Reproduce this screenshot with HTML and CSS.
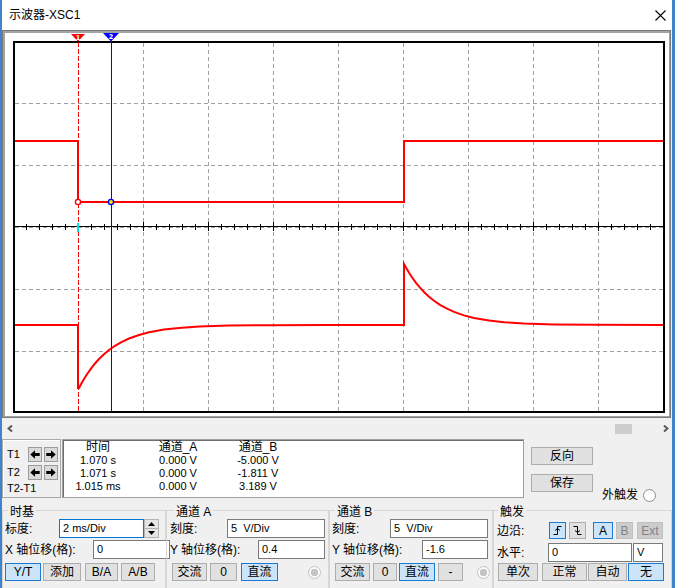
FILE: index.html
```html
<!DOCTYPE html>
<html>
<head>
<meta charset="utf-8">
<title>示波器-XSC1</title>
<link rel="stylesheet" href="styles.css">
</head>
<body>
<div class="window">
  <div class="titlebar">
    <span class="title">示波器-XSC1</span>
    <svg class="close" width="11" height="11" viewBox="0 0 11 11"><path d="M0.5 0.5L10.5 10.5M10.5 0.5L0.5 10.5" stroke="#000" stroke-width="1.1" fill="none"/></svg>
  </div>

  <div class="scope">
    <svg class="plot" width="664" height="383" viewBox="5 33 664 383">
      <g stroke="#a0a0a0" stroke-width="1" stroke-dasharray="4 3" fill="none">
        <path d="M78.5 43V411M143.5 43V411M208.5 43V411M273.5 43V411M338.5 43V411M403.5 43V411M468.5 43V411M533.5 43V411M598.5 43V411"/>
        <path d="M15 103.5H663M15 165.5H663M15 227.5H663M15 289.5H663M15 351.5H663"/>
      </g>
      <path d="M14 226.5H663" stroke="#000" stroke-width="1"/>
      <path stroke="#000" stroke-width="1" fill="none" d="M26.5 224V230M39.5 224V230M52.5 224V230M65.5 224V230M91.5 224V230M104.5 224V230M117.5 224V230M130.5 224V230M156.5 224V230M169.5 224V230M182.5 224V230M195.5 224V230M221.5 224V230M234.5 224V230M247.5 224V230M260.5 224V230M286.5 224V230M299.5 224V230M312.5 224V230M325.5 224V230M351.5 224V230M364.5 224V230M377.5 224V230M390.5 224V230M416.5 224V230M429.5 224V230M442.5 224V230M455.5 224V230M481.5 224V230M494.5 224V230M507.5 224V230M520.5 224V230M546.5 224V230M559.5 224V230M572.5 224V230M585.5 224V230M611.5 224V230M624.5 224V230M637.5 224V230M650.5 224V230"/>
      <path stroke="#000" stroke-width="1" fill="none" d="M143.5 222V231M208.5 222V231M273.5 222V231M338.5 222V231M403.5 222V231M468.5 222V231M533.5 222V231M598.5 222V231"/>
      <rect x="14" y="42" width="650" height="370" fill="none" stroke="#000" stroke-width="2"/>

      <g fill="none" stroke="#ff0000" stroke-width="2" stroke-linejoin="miter">
        <path d="M15 141H78V202H404V141H663"/>
        <path d="M15 325H78V388L79 388L81 384.2L84 379L87 374.3L91 368.6L95 363.5L99 359L104 354.2L109 350L115 345.8L121 342.3L129 338.5L139 335L149 332.3L164 329.6L179 327.9L199 326.6L229 325.6L269 325.2L329 325H404V264L406 267.6L409 272.7L412 277.3L416 282.8L420 287.7L424 292L429 296.7L434 300.8L440 304.9L446 308.2L454 311.9L464 315.4L474 317.9L489 320.5L504 322.2L524 323.5L554 324.4L594 324.8L663 325"/>
      </g>

      <path d="M78.5 42V411" stroke="#ff0000" stroke-width="1" stroke-dasharray="5 2"/>
      <path d="M111.5 41V411" stroke="#0000ff" stroke-width="1"/>
      <path d="M78 223V232" stroke="#00e0e0" stroke-width="2"/>

      <circle cx="78" cy="202" r="2.6" fill="#fff" stroke="#ff0000" stroke-width="1.4"/>
      <circle cx="111" cy="202" r="2.6" fill="#e8e800" stroke="#0000ff" stroke-width="1.4"/>

      <polygon points="71,34 85,34 78,41.5" fill="#ff0000"/>
      <text x="78" y="39.6" class="cur-num">1</text>
      <polygon points="103,33 119,33 111,41.5" fill="#0000ff"/>
      <text x="111" y="39.2" class="cur-num">2</text>
    </svg>
  </div>

  <div class="hscroll">
    <svg class="chev" width="6" height="7" viewBox="0 0 6 7"><path d="M5 0.5L1.6 3.5L5 6.5" stroke="#5a5a5a" stroke-width="2" fill="none"/></svg>
    <div class="spacer"></div>
    <div class="thumb"></div>
    <svg class="chev chev-r" width="6" height="7" viewBox="0 0 6 7"><path d="M1 0.5L4.4 3.5L1 6.5" stroke="#5a5a5a" stroke-width="2" fill="none"/></svg>
  </div>

  <div class="readout">
    <div class="tpanel">
      <div class="trow t1">
        <span class="tlabel">T1</span>
        <span class="abtn"><svg width="10" height="9" viewBox="0 0 10 9"><path d="M0.3 4.5L5 0.3V3H9.7V6H5V8.7Z" fill="#000"/></svg></span>
        <span class="abtn abtn2"><svg width="10" height="9" viewBox="0 0 10 9"><path d="M9.7 4.5L5 0.3V3H0.3V6H5V8.7Z" fill="#000"/></svg></span>
      </div>
      <div class="trow t2">
        <span class="tlabel">T2</span>
        <span class="abtn"><svg width="10" height="9" viewBox="0 0 10 9"><path d="M0.3 4.5L5 0.3V3H9.7V6H5V8.7Z" fill="#000"/></svg></span>
        <span class="abtn abtn2"><svg width="10" height="9" viewBox="0 0 10 9"><path d="M9.7 4.5L5 0.3V3H0.3V6H5V8.7Z" fill="#000"/></svg></span>
      </div>
      <div class="trow t3"><span class="tlabel tlabel-wide">T2-T1</span></div>
    </div>

    <div class="display">
      <div class="dgrid">
        <span class="dh">时间</span><span class="dh">通道_A</span><span class="dh">通道_B</span>
        <span>1.070 s</span><span>0.000 V</span><span>-5.000 V</span>
        <span>1.071 s</span><span>0.000 V</span><span>-1.811 V</span>
        <span>1.015 ms</span><span>0.000 V</span><span>3.189 V</span>
      </div>
    </div>

    <div class="side">
      <span class="btn sbtn">反向</span>
      <span class="btn sbtn sbtn2">保存</span>
      <span class="ext">外触发<span class="radio"></span></span>
    </div>
  </div>

  <div class="controls">
    <fieldset class="group g1">
      <legend>时基</legend>
      <div class="row r1">
        <span class="lbl l-scale">标度:</span>
        <span class="field focus f-scale">2 ms/Div</span>
        <span class="spin">
          <span class="spin-up"><svg width="7" height="4" viewBox="0 0 7 4"><path d="M0 4L3.5 0L7 4Z" fill="#000"/></svg></span>
          <span class="spin-dn"><svg width="7" height="4" viewBox="0 0 7 4"><path d="M0 0L3.5 4L7 0Z" fill="#000"/></svg></span>
        </span>
      </div>
      <div class="row r2">
        <span class="lbl l-xpos">X 轴位移(格):</span>
        <span class="field f-xpos">0</span>
      </div>
      <div class="row r3">
        <span class="btn on b-yt">Y/T</span>
        <span class="btn b-add">添加</span>
        <span class="btn b-ba">B/A</span>
        <span class="btn b-ab">A/B</span>
      </div>
    </fieldset>

    <fieldset class="group g2">
      <legend>通道 A</legend>
      <div class="row r1">
        <span class="lbl l-a-scale">刻度:</span>
        <span class="field f-a-scale">5  V/Div</span>
      </div>
      <div class="row r2">
        <span class="lbl l-a-pos">Y 轴位移(格):</span>
        <span class="field f-a-pos">0.4</span>
      </div>
      <div class="row r3">
        <span class="btn a-ac">交流</span>
        <span class="btn a-0">0</span>
        <span class="btn on a-dc">直流</span>
        <span class="radio dis a-radio"></span>
      </div>
    </fieldset>

    <fieldset class="group g3">
      <legend>通道 B</legend>
      <div class="row r1">
        <span class="lbl l-b-scale">刻度:</span>
        <span class="field f-b-scale">5  V/Div</span>
      </div>
      <div class="row r2">
        <span class="lbl l-b-pos">Y 轴位移(格):</span>
        <span class="field f-b-pos">-1.6</span>
      </div>
      <div class="row r3">
        <span class="btn b-ac">交流</span>
        <span class="btn b-0">0</span>
        <span class="btn on b-dc">直流</span>
        <span class="btn b-minus">-</span>
        <span class="radio dis b-radio"></span>
      </div>
    </fieldset>

    <fieldset class="group g4">
      <legend>触发</legend>
      <div class="row tr1">
        <span class="lbl l-edge">边沿:</span>
        <span class="btn on e-rise"><svg width="9" height="9" viewBox="0 0 9 9"><path d="M0.5 8.5H4.5V0.5H8.5M2 4.5L4.5 2.5L7 4.5" stroke="#000" stroke-width="1" fill="none"/></svg></span>
        <span class="btn e-fall"><svg width="9" height="9" viewBox="0 0 9 9"><path d="M0.5 0.5H4.5V8.5H8.5M2 4.5L4.5 6.5L7 4.5" stroke="#000" stroke-width="1" fill="none"/></svg></span>
        <span class="btn on e-a">A</span>
        <span class="btn dis e-b">B</span>
        <span class="btn dis e-ext">Ext</span>
      </div>
      <div class="row tr2">
        <span class="lbl l-level">水平:</span>
        <span class="field f-level">0</span>
        <span class="field f-unit">V</span>
      </div>
      <div class="row r3">
        <span class="btn m-single">单次</span>
        <span class="btn m-normal">正常</span>
        <span class="btn m-auto">自动</span>
        <span class="btn on m-none">无</span>
      </div>
    </fieldset>
  </div>
</div>
</body>
</html>
```

FILE: styles.css
```css
* { box-sizing: border-box; }

html, body {
  margin: 0;
  padding: 0;
  background: #f0f0f0;
}

body {
  font-family: "Liberation Sans", "Noto Sans CJK SC", sans-serif;
  font-size: 12px;
  color: #000;
}

.window {
  width: 675px;
  height: 588px;
  background: #f0f0f0;
  border-left: 2px solid #3f83cc;
  border-right: 3px solid #3f83cc;
  overflow: hidden;
}

/* title bar */
.titlebar {
  height: 30px;
  background: #fff;
  display: flex;
  align-items: center;
  justify-content: space-between;
  padding: 0 6px 0 7px;
}

.title {
  font-size: 12px;
  line-height: 14px;
}

.close { display: block; }

/* scope display */
.scope {
  width: 669px;
  border: 1px solid #7a7a7a;
  padding: 2px 1px 1px 2px;
  background: #a3a3a3;
}

.plot {
  display: block;
  background: #fff;
}

.cur-num {
  font-family: "DejaVu Sans", sans-serif;
  font-size: 6.5px;
  font-weight: bold;
  fill: #fff;
  text-anchor: middle;
}

/* horizontal scroll bar */
.hscroll {
  height: 21px;
  display: flex;
  align-items: center;
  padding: 0 3px 0 5px;
}

.chev { display: block; }
.spacer { flex: 1; }

.thumb {
  width: 17px;
  height: 10px;
  background: #cdcdcd;
  margin-right: 31px;
}

/* readout row */
.readout {
  display: flex;
  height: 59px;
}

.tpanel {
  width: 59px;
  height: 59px;
  border: 1px solid #a8a8a8;
  box-shadow: inset 1px 1px 0 #fff;
  padding: 6px 0 0 4px;
  font-size: 11px;
}

.trow {
  display: flex;
  align-items: center;
  height: 15px;
}

.t1 { margin-top: 1px; }
.t2 { margin-top: 3px; }
.t3 { margin-top: 1px; }

.tlabel {
  width: 21px;
  line-height: 13px;
  white-space: nowrap;
}

.tlabel-wide { width: auto; }

.abtn {
  width: 14px;
  height: 15px;
  border: 1px solid #9c9c9c;
  background: #dadada;
  display: flex;
  align-items: center;
  justify-content: center;
}

.abtn svg { display: block; }
.abtn2 { margin-left: 2px; }

.display {
  width: 462px;
  height: 59px;
  margin-left: 1px;
  border: 1px solid #a0a0a0;
  box-shadow: inset 1px 1px 0 #6e6e6e;
  background: #fff;
  padding-top: 1px;
}

.dgrid {
  display: grid;
  grid-template-columns: 70px 90px 70px;
  grid-auto-rows: 13px;
  text-align: center;
  font-size: 11px;
  line-height: 13px;
}

.dh { font-size: 12px; }

.side {
  display: grid;
  grid-template-columns: 62px auto;
  grid-template-rows: 20px 20px;
  row-gap: 7px;
  column-gap: 9px;
  padding: 8px 0 0 7px;
}

.sbtn {
  grid-column: 1;
  height: 20px;
}

.sbtn2 { grid-row: 2; }

.ext {
  grid-row: 2;
  grid-column: 2;
  align-self: end;
  display: flex;
  align-items: center;
  gap: 5px;
  line-height: 14px;
  margin-bottom: -8px;
}

/* buttons & fields */
.btn {
  display: flex;
  align-items: center;
  justify-content: center;
  height: 18px;
  border: 1px solid #adadad;
  background: #e1e1e1;
  font-size: 12px;
  line-height: 14px;
  flex: none;
}

.btn svg { display: block; }

.btn.on {
  background: #cce4f7;
  border-color: #1a7ad4;
}

.btn.dis {
  background: #cccccc;
  border-color: #bfbfbf;
  color: #838383;
}

.field {
  display: block;
  height: 19px;
  border: 1px solid #7a7a7a;
  background: #fff;
  padding-left: 3px;
  font-size: 11px;
  line-height: 17px;
  white-space: pre;
  flex: none;
}

.field.focus { border-color: #0078d7; }

.radio {
  display: block;
  width: 13px;
  height: 13px;
  border-radius: 50%;
  border: 1px solid #8c8c8c;
  background: #fff;
  flex: none;
}

.radio.dis {
  border-color: #c4c4c4;
  background: radial-gradient(circle, #c4c4c4 0 3.5px, #fbfbfb 4px);
}

.lbl {
  flex: none;
  line-height: 14px;
  white-space: nowrap;
}

/* group boxes */
.controls {
  display: flex;
  height: 90px;
}

.group {
  margin: 4px 0 0 0;
  padding: 0 0 0 2px;
  border: 1px solid #d6d6d6;
  min-width: 0;
  height: 92px;
}

.group legend {
  padding: 4px 2px 0;
  margin-left: 3px;
  font-size: 12px;
  line-height: 12px;
}

.g1 { width: 164px; }
.g2 { width: 163px; padding-left: 3px; }
.g2 legend { margin-left: 4px; }
.g3 { width: 164px; padding-left: 2px; }
.g3 legend { margin-left: 3px; }
.g4 { width: 179px; padding-left: 3px; }
.g4 legend { margin-left: 1px; }

.row {
  display: flex;
  align-items: center;
}

.r1 { margin-top: 1px; height: 19px; }
.r2 { margin-top: 2px; height: 19px; }
.r3 { margin-top: 4px; height: 18px; }
.tr1 { margin-top: 4px; height: 17px; }
.tr2 { margin-top: 4px; height: 19px; }
.g4 .r3 { margin-top: 1px; }

/* time base */
.l-scale { width: 54px; }
.f-scale { width: 85px; }
.spin {
  width: 15px;
  height: 19px;
  display: flex;
  flex-direction: column;
  flex: none;
}
.spin-up, .spin-dn {
  flex: 1;
  display: flex;
  align-items: center;
  justify-content: center;
  background: #e5e5e5;
  border: 1px solid #b4b4b4;
}
.spin-dn { border-top: none; }
.spin svg { display: block; }

.l-xpos { width: 88px; }
.f-xpos { width: 77px; }

.b-yt { width: 36px; }
.b-add { width: 38px; margin-left: 2px; }
.b-ba { width: 33px; margin-left: 4px; }
.b-ab { width: 34px; margin-left: 3px; }

/* channel A */
.l-a-scale { width: 57px; }
.f-a-scale { width: 98px; }
.l-a-pos { width: 88px; }
.f-a-pos { width: 67px; }
.a-ac { width: 35px; margin-left: 2px; }
.a-0 { width: 27px; margin-left: 3px; }
.a-dc { width: 37px; margin-left: 4px; }
.a-radio { margin-left: 30px; }

/* channel B */
.l-b-scale { width: 58px; }
.f-b-scale { width: 98px; }
.l-b-pos { width: 90px; }
.f-b-pos { width: 66px; }
.b-ac { width: 35px; margin-left: 3px; }
.b-0 { width: 24px; margin-left: 3px; }
.b-dc { width: 36px; margin-left: 2px; }
.b-minus { width: 25px; margin-left: 3px; }
.b-radio { margin-left: 14px; }

/* trigger */
.l-edge { width: 52px; }
.e-rise { width: 17px; height: 17px; }
.e-fall { width: 17px; height: 17px; margin-left: 3px; }
.e-a { width: 20px; height: 17px; margin-left: 7px; }
.e-b { width: 17px; height: 17px; margin-left: 3px; }
.e-ext { width: 26px; height: 17px; margin-left: 4px; }
.l-level { width: 51px; }
.f-level { width: 84px; }
.f-unit { width: 30px; margin-left: 1px; }
.m-single { width: 40px; margin-left: 1px; }
.m-normal { width: 45px; margin-left: 4px; }
.m-auto { width: 39px; margin-left: 1px; }
.m-none { width: 36px; margin-left: 1px; }
```
